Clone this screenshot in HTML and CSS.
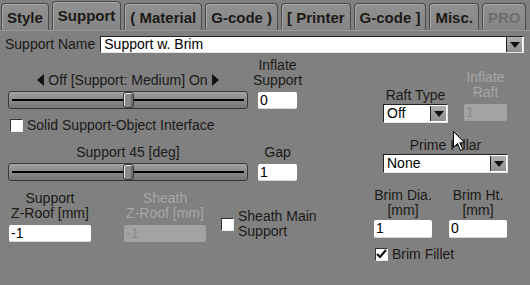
FILE: index.html
```html
<!DOCTYPE html>
<html lang="en">
<head>
    <meta charset="UTF-8">
    <title>Support Settings</title>
    <link rel="stylesheet" href="styles.css">
</head>
<body>

    <!-- Tabs -->
    <div class="tabs">
        <div class="tab">Style</div>
        <div class="tab active">Support</div>
        <div class="tab">( Material</div>
        <div class="tab">G-code )</div>
        <div class="tab">[ Printer</div>
        <div class="tab">G-code ]</div>
        <div class="tab">Misc.</div>
        <div class="tab disabled">PRO</div>
    </div>

    <!-- Profile name -->
    <div class="name-row">
        <span>Support Name</span>
        <div class="combo wide">
            <span class="combo-text">Support w. Brim</span>
            <span class="combo-btn"></span>
        </div>
    </div>

    <div class="panel">
        <!-- Left column -->
        <div class="left">
            <div class="row bottom">
                <div class="slider-block">
                    <div class="slider-label"><span class="arrow-l"></span> Off [Support: Medium] On <span class="arrow-r"></span></div>
                    <div class="slider"><span class="thumb" style="left: 114px"></span></div>
                </div>
                <div class="field small">
                    <div class="label">Inflate<br>Support</div>
                    <div class="input">0</div>
                </div>
            </div>

            <label class="check first">
                <span class="box"></span>
                <span>Solid Support-Object Interface</span>
            </label>

            <div class="row bottom second">
                <div class="slider-block">
                    <div class="slider-label">Support 45 [deg]</div>
                    <div class="slider"><span class="thumb" style="left: 114px"></span></div>
                </div>
                <div class="field small">
                    <div class="label">Gap</div>
                    <div class="input">1</div>
                </div>
            </div>

            <div class="row bottom roof">
                <div class="field medium">
                    <div class="label">Support<br>Z-Roof [mm]</div>
                    <div class="input">-1</div>
                </div>
                <div class="field medium off">
                    <div class="label">Sheath<br>Z-Roof [mm]</div>
                    <div class="input">-1</div>
                </div>
                <label class="check sheath">
                    <span class="box"></span>
                    <span>Sheath Main<br>Support</span>
                </label>
            </div>
        </div>

        <!-- Right column -->
        <div class="right">
            <div class="row bottom raft">
                <div class="field raft-type">
                    <div class="label">Raft Type</div>
                    <div class="combo">
                        <span class="combo-text">Off</span>
                        <span class="combo-btn"></span>
                    </div>
                </div>
                <div class="field raft-inflate off">
                    <div class="label">Inflate<br>Raft</div>
                    <div class="input">1</div>
                </div>
            </div>

            <div class="field pillar">
                <div class="label">Prime Pillar</div>
                <div class="combo">
                    <span class="combo-text">None</span>
                    <span class="combo-btn"></span>
                </div>
            </div>

            <div class="row bottom brim">
                <div class="field brim-field">
                    <div class="label">Brim Dia.<br>[mm]</div>
                    <div class="input">1</div>
                </div>
                <div class="field brim-field">
                    <div class="label">Brim Ht.<br>[mm]</div>
                    <div class="input">0</div>
                </div>
            </div>

            <label class="check fillet">
                <span class="box checked">
                    <svg width="11" height="11" viewBox="0 0 11 11"><path d="M1 5 L4 8 L10 1" fill="none" stroke="#111" stroke-width="2.2"/></svg>
                </span>
                <span>Brim Fillet</span>
            </label>
        </div>
    </div>

    <!-- mouse pointer -->
    <svg class="pointer" width="13" height="21" viewBox="0 0 13 21">
        <path d="M0.5 0.5 L0.5 16.5 L4.5 12.5 L7.5 19.5 L9.8 18.5 L6.8 11.8 L11.5 11.8 Z" fill="#fff" stroke="#000" stroke-width="1"/>
    </svg>

</body>
</html>
```

FILE: styles.css
```css
body {
    margin: 0;
    width: 530px;
    height: 285px;
    overflow: hidden;
    position: relative;
    background-color: #808080;
    color: #1c1a17;
    font-family: "Liberation Sans", Arial, sans-serif;
    font-size: 14px;
    line-height: 15px;
}

/* Tabs */
.tabs {
    display: flex;
    align-items: flex-end;
    gap: 3px;
    height: 31px;
    padding-left: 1px;
    border-bottom: 1px solid #989898;
    box-sizing: border-box;
}

.tab {
    height: 27px;
    padding: 0 5px;
    border: 1px solid #4a4a4a;
    border-bottom: none;
    border-radius: 4px 4px 0 0;
    background: linear-gradient(#919191, #858585);
    box-shadow: inset 1px 1px #a8a8a8;
    font-size: 15px;
    font-weight: bold;
    line-height: 28px;
    box-sizing: border-box;
}

.tab.active {
    height: 29px;
    line-height: 27px;
}

.tab.disabled {
    color: #6e6e6e;
}

/* Name row */
.name-row {
    display: flex;
    align-items: center;
    gap: 5px;
    padding: 5px 6px 0 5px;
}

/* Combo box */
.combo {
    display: flex;
    align-items: center;
    width: 100%;
    height: 19px;
    background-color: #fff;
    border-top: 1px solid #222;
    border-left: 1px solid #222;
    border-right: 1px solid #e6e6e6;
    border-bottom: 1px solid #e6e6e6;
    box-sizing: border-box;
}

.combo.wide {
    flex: 1;
    height: 17px;
}

.combo-text {
    flex: 1;
    padding-left: 3px;
    color: #000;
    white-space: nowrap;
}

.combo-btn {
    width: 16px;
    height: 15px;
    margin-right: 1px;
    border-left: 1px solid #222;
    background: linear-gradient(#b0b0b0, #8e8e8e);
    position: relative;
    box-sizing: border-box;
}

.combo-btn::after {
    content: "";
    position: absolute;
    left: 3px;
    top: 5px;
    border-left: 5px solid transparent;
    border-right: 5px solid transparent;
    border-top: 6px solid #111;
}

/* Panel */
.panel {
    display: flex;
    margin-top: 5px;
}

.left {
    width: 366px;
    padding-left: 8px;
    box-sizing: border-box;
}

.right {
    padding: 12px 0 0 8px;
}

.row {
    display: flex;
}

.row.bottom {
    align-items: flex-end;
}

/* Slider */
.slider-block {
    width: 240px;
    display: flex;
    flex-direction: column;
    align-items: center;
    gap: 3px;
}

.slider-label {
    white-space: nowrap;
}

.arrow-l, .arrow-r {
    display: inline-block;
    width: 0;
    height: 0;
    border-top: 6px solid transparent;
    border-bottom: 6px solid transparent;
    vertical-align: -1px;
}

.arrow-l {
    border-right: 7px solid #111;
}

.arrow-r {
    border-left: 7px solid #111;
}

.slider {
    width: 100%;
    height: 18px;
    position: relative;
    border: 1px solid #3a3a3a;
    border-radius: 3px;
    background: linear-gradient(#a4a4a4, #8a8a8a 45%, #787878);
    box-sizing: border-box;
}

.slider::before {
    content: "";
    position: absolute;
    left: 3px;
    right: 3px;
    top: 7px;
    height: 2px;
    background-color: #000;
    box-shadow: 0 2px 0 -1px #eee;
}

.thumb {
    position: absolute;
    top: 0;
    width: 11px;
    height: 16px;
    border: 1px solid #3a3a3a;
    border-radius: 3px;
    background-color: #8a8a8a;
    box-shadow: inset 1px 1px #e8e8e8, inset -2px 0 #6a6a6a;
    box-sizing: border-box;
}

/* Fields */
.field {
    display: flex;
    flex-direction: column;
    align-items: center;
}

.label {
    text-align: center;
    white-space: nowrap;
    margin-bottom: 4px;
}

.input {
    width: 100%;
    height: 17px;
    padding-left: 2px;
    background-color: #fff;
    color: #000;
    border-radius: 2px;
    box-shadow: inset 0 -1px #d6d6d6;
    box-sizing: border-box;
    line-height: 17px;
}

.field.off .label {
    color: #a6a6a6;
}

.field.off .input {
    background-color: #a3a3a3;
    color: #8a8a8a;
    box-shadow: none;
}

.field.small {
    width: 39px;
    margin-left: 10px;
}

.field.medium {
    width: 82px;
}

.row.roof {
    margin-top: 10px;
    padding-left: 1px;
    gap: 33px;
}

.row.second {
    margin-top: 12px;
}

/* Checkbox */
.check {
    display: flex;
    align-items: center;
    gap: 4px;
}

.box {
    width: 13px;
    height: 13px;
    background-color: #fff;
    border-top: 1px solid #333;
    border-left: 1px solid #333;
    border-right: 1px solid #ececec;
    border-bottom: 1px solid #ececec;
    box-sizing: border-box;
    display: flex;
    align-items: center;
    justify-content: center;
}

.check.first {
    margin: 9px 0 0 2px;
}

.check.sheath {
    margin-left: -18px;
    margin-bottom: 3px;
}

.check.fillet {
    margin: 9px 0 0 1px;
}

/* Right column */
.row.raft {
    margin-left: 9px;
    gap: 16px;
}

.raft-type {
    width: 65px;
}

.raft-type .label {
    margin-bottom: 1px;
}

.raft-inflate {
    width: 43px;
}

.raft-inflate .input {
    margin-bottom: 2px;
}

.field.pillar {
    width: 125px;
    margin: 15px 0 0 9px;
}

.field.pillar .label {
    margin-bottom: 1px;
}

.row.brim {
    margin-top: 15px;
    gap: 17px;
}

.brim-field {
    width: 58px;
}

.brim-field .label {
    margin-bottom: 2px;
}

.brim-field .input {
    height: 18px;
}

/* Mouse pointer, drawn over the form */
.pointer {
    position: absolute;
    left: 453px;
    top: 131px;
}
```
